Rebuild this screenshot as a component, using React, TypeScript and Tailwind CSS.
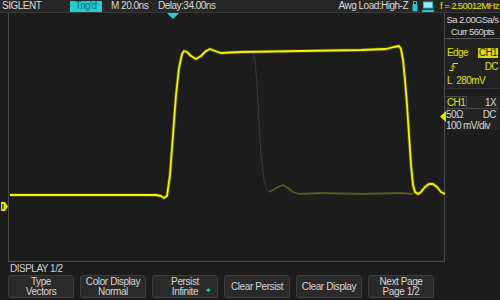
const font = { fontFamily: '"Liberation Sans Narrow", "Liberation Sans", Arial, sans-serif' }

const mainTrace =
  "9,195 155,195 160,196 163,198 166,196 169,175 172,135 175,95 178,68 181,54 183,51 186,52 190,56 195,59 200,56 205,51 209,49 214,51 220,53 240,52 300,51 360,50 385,49 393,47 398,46 400,49 402,60 404,80 406,105 408,135 410,165 412,185 414,192 417,194 420,192 424,187 428,184 432,184 436,187 440,192 444,194"

const dimTrace =
  "268,192 272,190 277,187 282,185 287,188 292,192 298,194 320,193 360,194 400,193 412,194"

const greyTrace = "252,52 254,60 256,85 258,120 260,155 263,180 266,190 268,192"

function Button({ top, bottom, dot }: { top: string; bottom?: string; dot?: boolean }) {
  return (
    <div className="relative w-[66px] h-[23px] rounded-[3px] border border-[#3e3e3e] bg-[#2a2a2a] flex flex-col items-center justify-center text-[10px] leading-[10px] text-[#d6d6d6] tracking-[-0.4px]">
      <span>{top}</span>
      {bottom && <span>{bottom}</span>}
      {dot && <span className="absolute right-[5px] top-[11px] text-[#26d4dc] text-[8px] leading-[8px]">✦</span>}
    </div>
  )
}

export default function App() {
  return (
    <div style={font} className="w-[500px] h-[300px] bg-[#1c1c1c] flex flex-col overflow-hidden whitespace-nowrap text-[#d8d8d8]">
      {/* top status bar */}
      <div className="h-[13px] bg-[#262626] border-b border-[#3a3a3a] flex items-center text-[10px] leading-[12px] tracking-[-0.5px]">
        <span className="ml-[2px] w-[68px] text-[#dcdcdc]">SIGLENT</span>
        <span className="w-[32px] h-[11px] bg-[#22cdd4] text-[#0e6f78] flex items-center justify-center">Trig'd</span>
        <span className="ml-[9px] w-[47px]">M 20.0ns</span>
        <span>Delay:34.00ns</span>
        <span className="ml-auto">Awg Load:High-Z</span>
        <svg width="8" height="11" viewBox="0 0 8 11" className="ml-[3px]">
          <rect x="1.5" y="3" width="5" height="7.5" rx="1.5" fill="#23c6cf" />
          <rect x="2.5" y="0.5" width="3" height="3" fill="none" stroke="#23c6cf" strokeWidth="1" />
        </svg>
        <svg width="12" height="11" viewBox="0 0 12 11" className="ml-[3px]">
          <rect x="1" y="0.5" width="10" height="7" fill="#23c6cf" />
          <rect x="2" y="1.5" width="8" height="5" fill="#9ee8ec" />
          <rect x="0" y="9" width="12" height="2" fill="#23c6cf" />
        </svg>
        <span className="ml-[6px] mr-[1px] text-[#e6e600] text-[9.5px] tracking-[-0.6px]">f = 2.50012MHz</span>
      </div>

      <div className="flex">
        {/* waveform area */}
        <div className="ml-[8px] w-[437px] h-[249px] border-l border-b border-r border-[#4a4a4a] relative">
          <svg width="437" height="249" className="block">
            <g transform="translate(-8,-13)">
              <polyline points={greyTrace} fill="none" stroke="#3a3a34" strokeWidth="1" />
              <polyline points={dimTrace} fill="none" stroke="#57561f" strokeWidth="1.8" strokeLinejoin="round" />
              <polyline points={mainTrace} fill="none" stroke="#e8e800" strokeOpacity="0.25" strokeWidth="3.5" strokeLinejoin="round" />
              <polyline points={mainTrace} fill="none" stroke="#f4f400" strokeWidth="1.8" strokeLinejoin="round" />
              <polygon points="166,13 178,13 172,19" fill="#22cdd4" />
            </g>
          </svg>
          {/* channel 1 ground marker */}
          <svg width="7" height="9" viewBox="0 0 7 9" className="absolute left-[-8px] top-[189px]">
            <path d="M0 0 H4 L7 4.5 L4 9 H0 Z" fill="#e6e600" />
            <path d="M2 2 V7" stroke="#1c1c1c" strokeWidth="1.3" />
          </svg>
        </div>

        {/* right info panel */}
        <div className="flex-1 flex flex-col text-[10px] leading-[11px] tracking-[-0.6px] relative">
          <div className="h-[26px] border-b border-[#555] flex flex-col items-center justify-center gap-[1px] text-[9.5px] text-[#d8d8d8]">
            <span>Sa 2.00GSa/s</span>
            <span>Curr 560pts</span>
          </div>
          <div className="h-[50px] bg-[#222] border-b border-[#2e2e2e] px-[2px] pt-[8px] flex flex-col gap-[3px] text-[#e2e200]">
            <div className="flex justify-between items-center">
              <span>Edge</span>
              <span className="bg-[#dcdc00] text-[#1c1c1c] px-[1px] leading-[10px]">CH1</span>
            </div>
            <div className="flex justify-between items-center">
              <svg width="10" height="8" viewBox="0 0 10 8" className="ml-[2px]">
                <path d="M0 7.5 H4 V0.5 H9" fill="none" stroke="#e2e200" strokeWidth="1" />
                <path d="M2 4.5 L4 2.5 L6 4.5" fill="none" stroke="#e2e200" strokeWidth="1" />
              </svg>
              <span>DC</span>
            </div>
            <span>L&nbsp; 280mV</span>
          </div>
          <div className="mt-[7px] h-[34px] bg-[#242424] px-[1px] flex flex-col">
            <div className="flex justify-between items-center border-b border-[#4a4a4a]">
              <span className="text-[#e2e200] border-t border-r border-[#4a4a4a] px-[1px]">CH1</span>
              <span className="mr-[3px]">1X</span>
            </div>
            <div className="flex justify-between pr-[3px]">
              <span>50Ω</span>
              <span>DC</span>
            </div>
            <span>100 mV/div</span>
          </div>
          <svg width="6" height="11" viewBox="0 0 6 11" className="absolute left-[-5px] top-[98px]">
            <path d="M6 0 V11 L0 5.5 Z" fill="#e6e600" />
          </svg>
        </div>
      </div>

      {/* bottom menu */}
      <div className="ml-[10px] mt-[1px] text-[10px] leading-[11px] tracking-[-0.5px] text-[#cfcfcf]">DISPLAY 1/2</div>
      <div className="ml-[8px] mt-[1px] flex gap-[6px]">
        <Button top="Type" bottom="Vectors" />
        <Button top="Color Display" bottom="Normal" />
        <Button top="Persist" bottom="Infinite" dot />
        <Button top="Clear Persist" />
        <Button top="Clear Display" />
        <Button top="Next Page" bottom="Page 1/2" />
      </div>
    </div>
  )
}
